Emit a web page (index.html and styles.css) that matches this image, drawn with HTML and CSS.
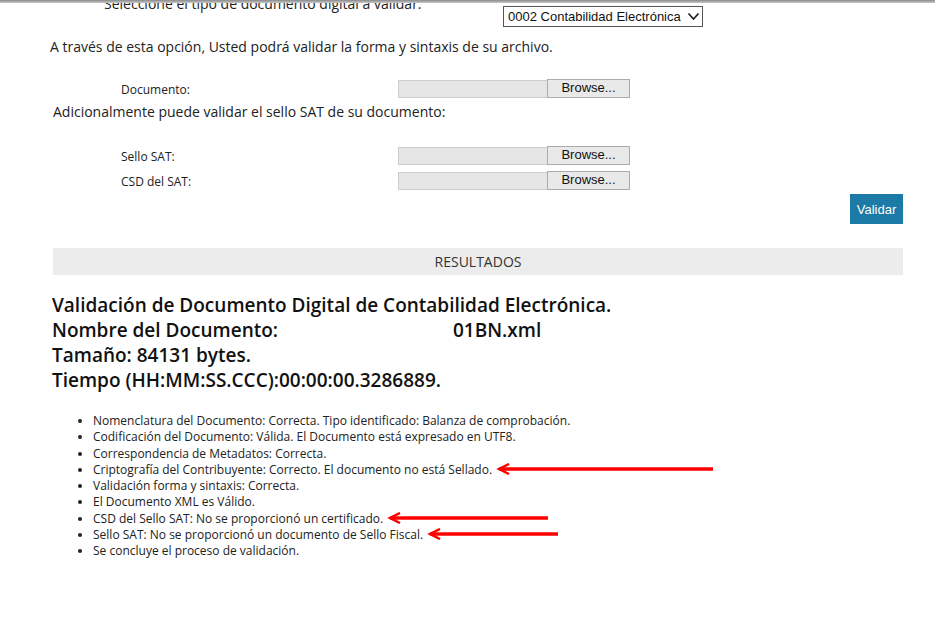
FILE: index.html
```html
<!DOCTYPE html>
<html lang="es">
<head>
    <meta charset="UTF-8">
    <title>Validador de Contabilidad Electrónica</title>
    <link rel="stylesheet" href="styles.css">
</head>
<body>
    <div class="topline"></div>
    <div class="page">
        <div class="select-row">
            <span class="select-label">Seleccione el tipo de documento digital a validar:</span>
            <div class="fake-select">
                0002 Contabilidad Electrónica
                <svg class="chevron" width="13" height="9" viewBox="0 0 13 9"><path d="M1.5 1.5 L6.5 7 L11.5 1.5" fill="none" stroke="#222" stroke-width="1.8"/></svg>
            </div>
        </div>

        <p class="intro">A través de esta opción, Usted podrá validar la forma y sintaxis de su archivo.</p>

        <div class="file-row first">
            <span class="file-label">Documento:</span>
            <div class="file-input"><span class="file-box"></span><span class="browse">Browse...</span></div>
        </div>

        <p class="intro second">Adicionalmente puede validar el sello SAT de su documento:</p>

        <div class="file-row sello">
            <span class="file-label">Sello SAT:</span>
            <div class="file-input"><span class="file-box"></span><span class="browse">Browse...</span></div>
        </div>
        <div class="file-row csd">
            <span class="file-label">CSD del SAT:</span>
            <div class="file-input"><span class="file-box"></span><span class="browse">Browse...</span></div>
        </div>

        <div class="actions">
            <button class="btn-validar">Validar</button>
        </div>

        <div class="results-bar">RESULTADOS</div>

        <div class="summary">
            <div>Validación de Documento Digital de Contabilidad Electrónica.</div>
            <div>Nombre del Documento: <span class="redacted"></span>01BN.xml</div>
            <div>Tamaño: 84131 bytes.</div>
            <div>Tiempo (HH:MM:SS.CCC):00:00:00.3286889.</div>
        </div>

        <ul class="checks">
            <li>Nomenclatura del Documento: Correcta. Tipo identificado: Balanza de comprobación.</li>
            <li>Codificación del Documento: Válida. El Documento está expresado en UTF8.</li>
            <li>Correspondencia de Metadatos: Correcta.</li>
            <li>Criptografía del Contribuyente: Correcto. El documento no está Sellado.<svg class="arrow" width="218" height="12" viewBox="0 0 218 12"><path d="M3 6 H217" stroke="#f00" stroke-width="3.5"/><path d="M13 1 L3 6 L13 11" fill="none" stroke="#f00" stroke-width="2.5"/></svg></li>
            <li>Validación forma y sintaxis: Correcta.</li>
            <li>El Documento XML es Válido.</li>
            <li>CSD del Sello SAT: No se proporcionó un certificado.<svg class="arrow" width="162" height="12" viewBox="0 0 162 12"><path d="M3 6 H161" stroke="#f00" stroke-width="3.5"/><path d="M13 1 L3 6 L13 11" fill="none" stroke="#f00" stroke-width="2.5"/></svg></li>
            <li>Sello SAT: No se proporcionó un documento de Sello Fiscal.<svg class="arrow" width="132" height="12" viewBox="0 0 132 12"><path d="M3 6 H131" stroke="#f00" stroke-width="3.5"/><path d="M13 1 L3 6 L13 11" fill="none" stroke="#f00" stroke-width="2.5"/></svg></li>
            <li>Se concluye el proceso de validación.</li>
        </ul>
    </div>
</body>
</html>
```

FILE: styles.css
```css
body {
    margin: 0;
    background: #fff;
    color: #222;
    font-family: "Open Sans", "Noto Sans", sans-serif;
}

.topline {
    height: 3px;
    background: linear-gradient(#8a8a8a, #c8c8c8);
}

.page {
    width: 850px;
    padding-left: 53px;
}

.select-row {
    display: flex;
    height: 25px;
    overflow: hidden;
    padding-left: 51px;
}

.select-label {
    font-size: 14px;
    line-height: 20px;
    margin-top: -9px;
    width: 399px;
    color: #222;
}

.fake-select {
    margin-top: 3px;
    box-sizing: border-box;
    width: 200px;
    height: 21px;
    border: 1px solid #555;
    font-family: "Liberation Sans", Arial, sans-serif;
    font-size: 13px;
    line-height: 19px;
    padding-left: 4px;
    color: #111;
    display: flex;
    align-items: center;
    gap: 4px;
}

.chevron {
    margin-left: 2px;
}

.intro {
    margin: 9px 0 0 -3px;
    font-size: 14px;
    line-height: 20px;
}

.intro.second {
    margin: 4px 0 0 0;
}

.file-row {
    display: flex;
    align-items: center;
    padding-left: 68px;
    height: 20px;
}

.file-row.first {
    margin-top: 21px;
}

.file-row.sello {
    margin-top: 23px;
}

.file-row.csd {
    margin-top: 5px;
}

.file-label {
    width: 277px;
    font-size: 12px;
    line-height: 16px;
    padding-top: 3px;
}

.file-input {
    display: flex;
    height: 19px;
}

.file-box {
    box-sizing: border-box;
    width: 149px;
    height: 18px;
    margin-top: 1px;
    background: #e6e6e6;
    border: 1px solid #cdcdcd;
    border-right: none;
}

.browse {
    box-sizing: border-box;
    width: 83px;
    height: 19px;
    background: #e9e9e9;
    border: 1px solid #ababab;
    font-family: "Liberation Sans", Arial, sans-serif;
    font-size: 13px;
    line-height: 16px;
    text-align: center;
    color: #111;
}

.actions {
    display: flex;
    justify-content: flex-end;
    margin-top: 4px;
}

.btn-validar {
    width: 53px;
    height: 30px;
    border: none;
    background: #1c7aa7;
    color: #fff;
    font-family: "Liberation Sans", Arial, sans-serif;
    font-size: 13px;
    padding: 0;
}

.results-bar {
    margin-top: 24px;
    height: 27px;
    background: #ececec;
    text-align: center;
    font-size: 14px;
    line-height: 28px;
    color: #333;
}

.summary {
    margin: 18px 0 0 -1px;
    font-size: 19px;
    font-weight: 600;
    line-height: 25px;
    color: #111;
}

.redacted {
    display: inline-block;
    width: 170px;
}

.checks {
    margin: 20px 0 0 0;
    padding-left: 40px;
    font-size: 12px;
    line-height: 16.25px;
    color: #222;
}

.checks li {
    height: 16.25px;
}

.arrow {
    vertical-align: middle;
    margin-left: 4px;
    margin-top: -3px;
}
```
